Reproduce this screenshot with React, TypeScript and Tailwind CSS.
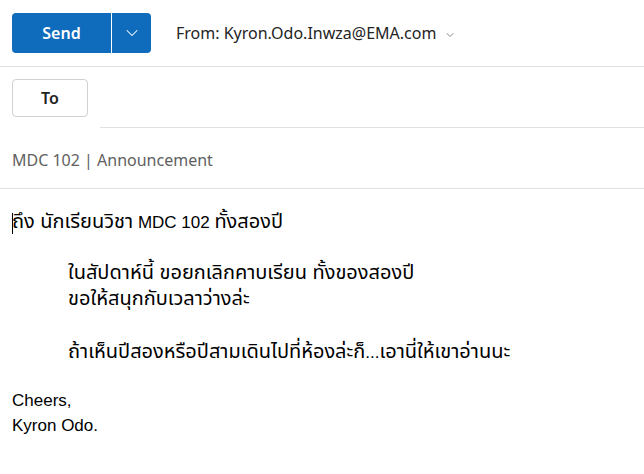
import { ChevronDown } from 'lucide-react';

const uiFont = { fontFamily: '"Noto Sans", "Open Sans", sans-serif' };

function Th({ children }: { children: string }) {
  return <span className="text-[20px] leading-[18px]">{children}</span>;
}

export default function App() {
  return (
    <div className="h-[474px] w-[644px] overflow-hidden bg-white text-[#242424]" style={uiFont}>
      <div className="flex h-[67px] items-center border-b border-[#e0e0e0] pl-3">
        <div className="flex h-10 w-[139px] overflow-hidden rounded-[4px] bg-[#0f6cbd] text-white">
          <button className="flex w-[99px] items-center justify-center text-[16px] font-semibold">Send</button>
          <div className="w-px bg-white" />
          <button className="flex flex-1 items-center justify-center">
            <ChevronDown size={20} strokeWidth={1.25} />
          </button>
        </div>
        <div className="ml-[25px] flex items-center text-[16px]">
          <span>From: Kyron.Odo.Inwza@EMA.com</span>
          <ChevronDown size={12} strokeWidth={1.5} className="ml-[8px] mt-[3px] text-[#616161]" />
        </div>
      </div>
      <div className="flex h-[61px] items-center">
        <div className="ml-3 flex h-[38px] w-[76px] shrink-0 items-center justify-center rounded-[4px] border border-[#d1d1d1] text-[16px] font-semibold">
          To
        </div>
        <div className="ml-3 h-full flex-1 border-b border-[#e0e0e0]" />
      </div>
      <div className="flex h-[61px] items-center border-b border-[#e0e0e0] pl-3 pt-[3px] text-[16px] text-[#616161]">
        MDC 102 | Announcement
      </div>
      <div
        className="pl-3 pt-[21px] text-[17px] leading-[25.5px] text-black"
        style={{ fontFamily: '"Liberation Sans", "Noto Sans Thai", "Noto Sans", sans-serif' }}
      >
        <div className="relative h-[25.5px]">
          <span className="absolute left-0 top-[3px] h-[21px] w-px bg-black" />
          <Th>ถึง นักเรียนวิชา</Th> MDC 102 <Th>ทั้งสองปี</Th>
        </div>
        <div className="h-[25.5px]" />
        <div className="h-[25.5px] pl-14">
          <Th>ในสัปดาห์นี้ ขอยกเลิกคาบเรียน ทั้งของสองปี</Th>
        </div>
        <div className="h-[25.5px] pl-14">
          <Th>ขอให้สนุกกับเวลาว่างล่ะ</Th>
        </div>
        <div className="h-[27.5px]" />
        <div className="h-[23px] pl-14">
          <Th>ถ้าเห็นปีสองหรือปีสามเดินไปที่ห้องล่ะก็</Th>...<Th>เอานี่ให้เขาอ่านนะ</Th>
        </div>
        <div className="h-[25.5px]" />
        <div className="h-[25px]">Cheers,</div>
        <div className="h-[25px]">Kyron Odo.</div>
      </div>
    </div>
  );
}
